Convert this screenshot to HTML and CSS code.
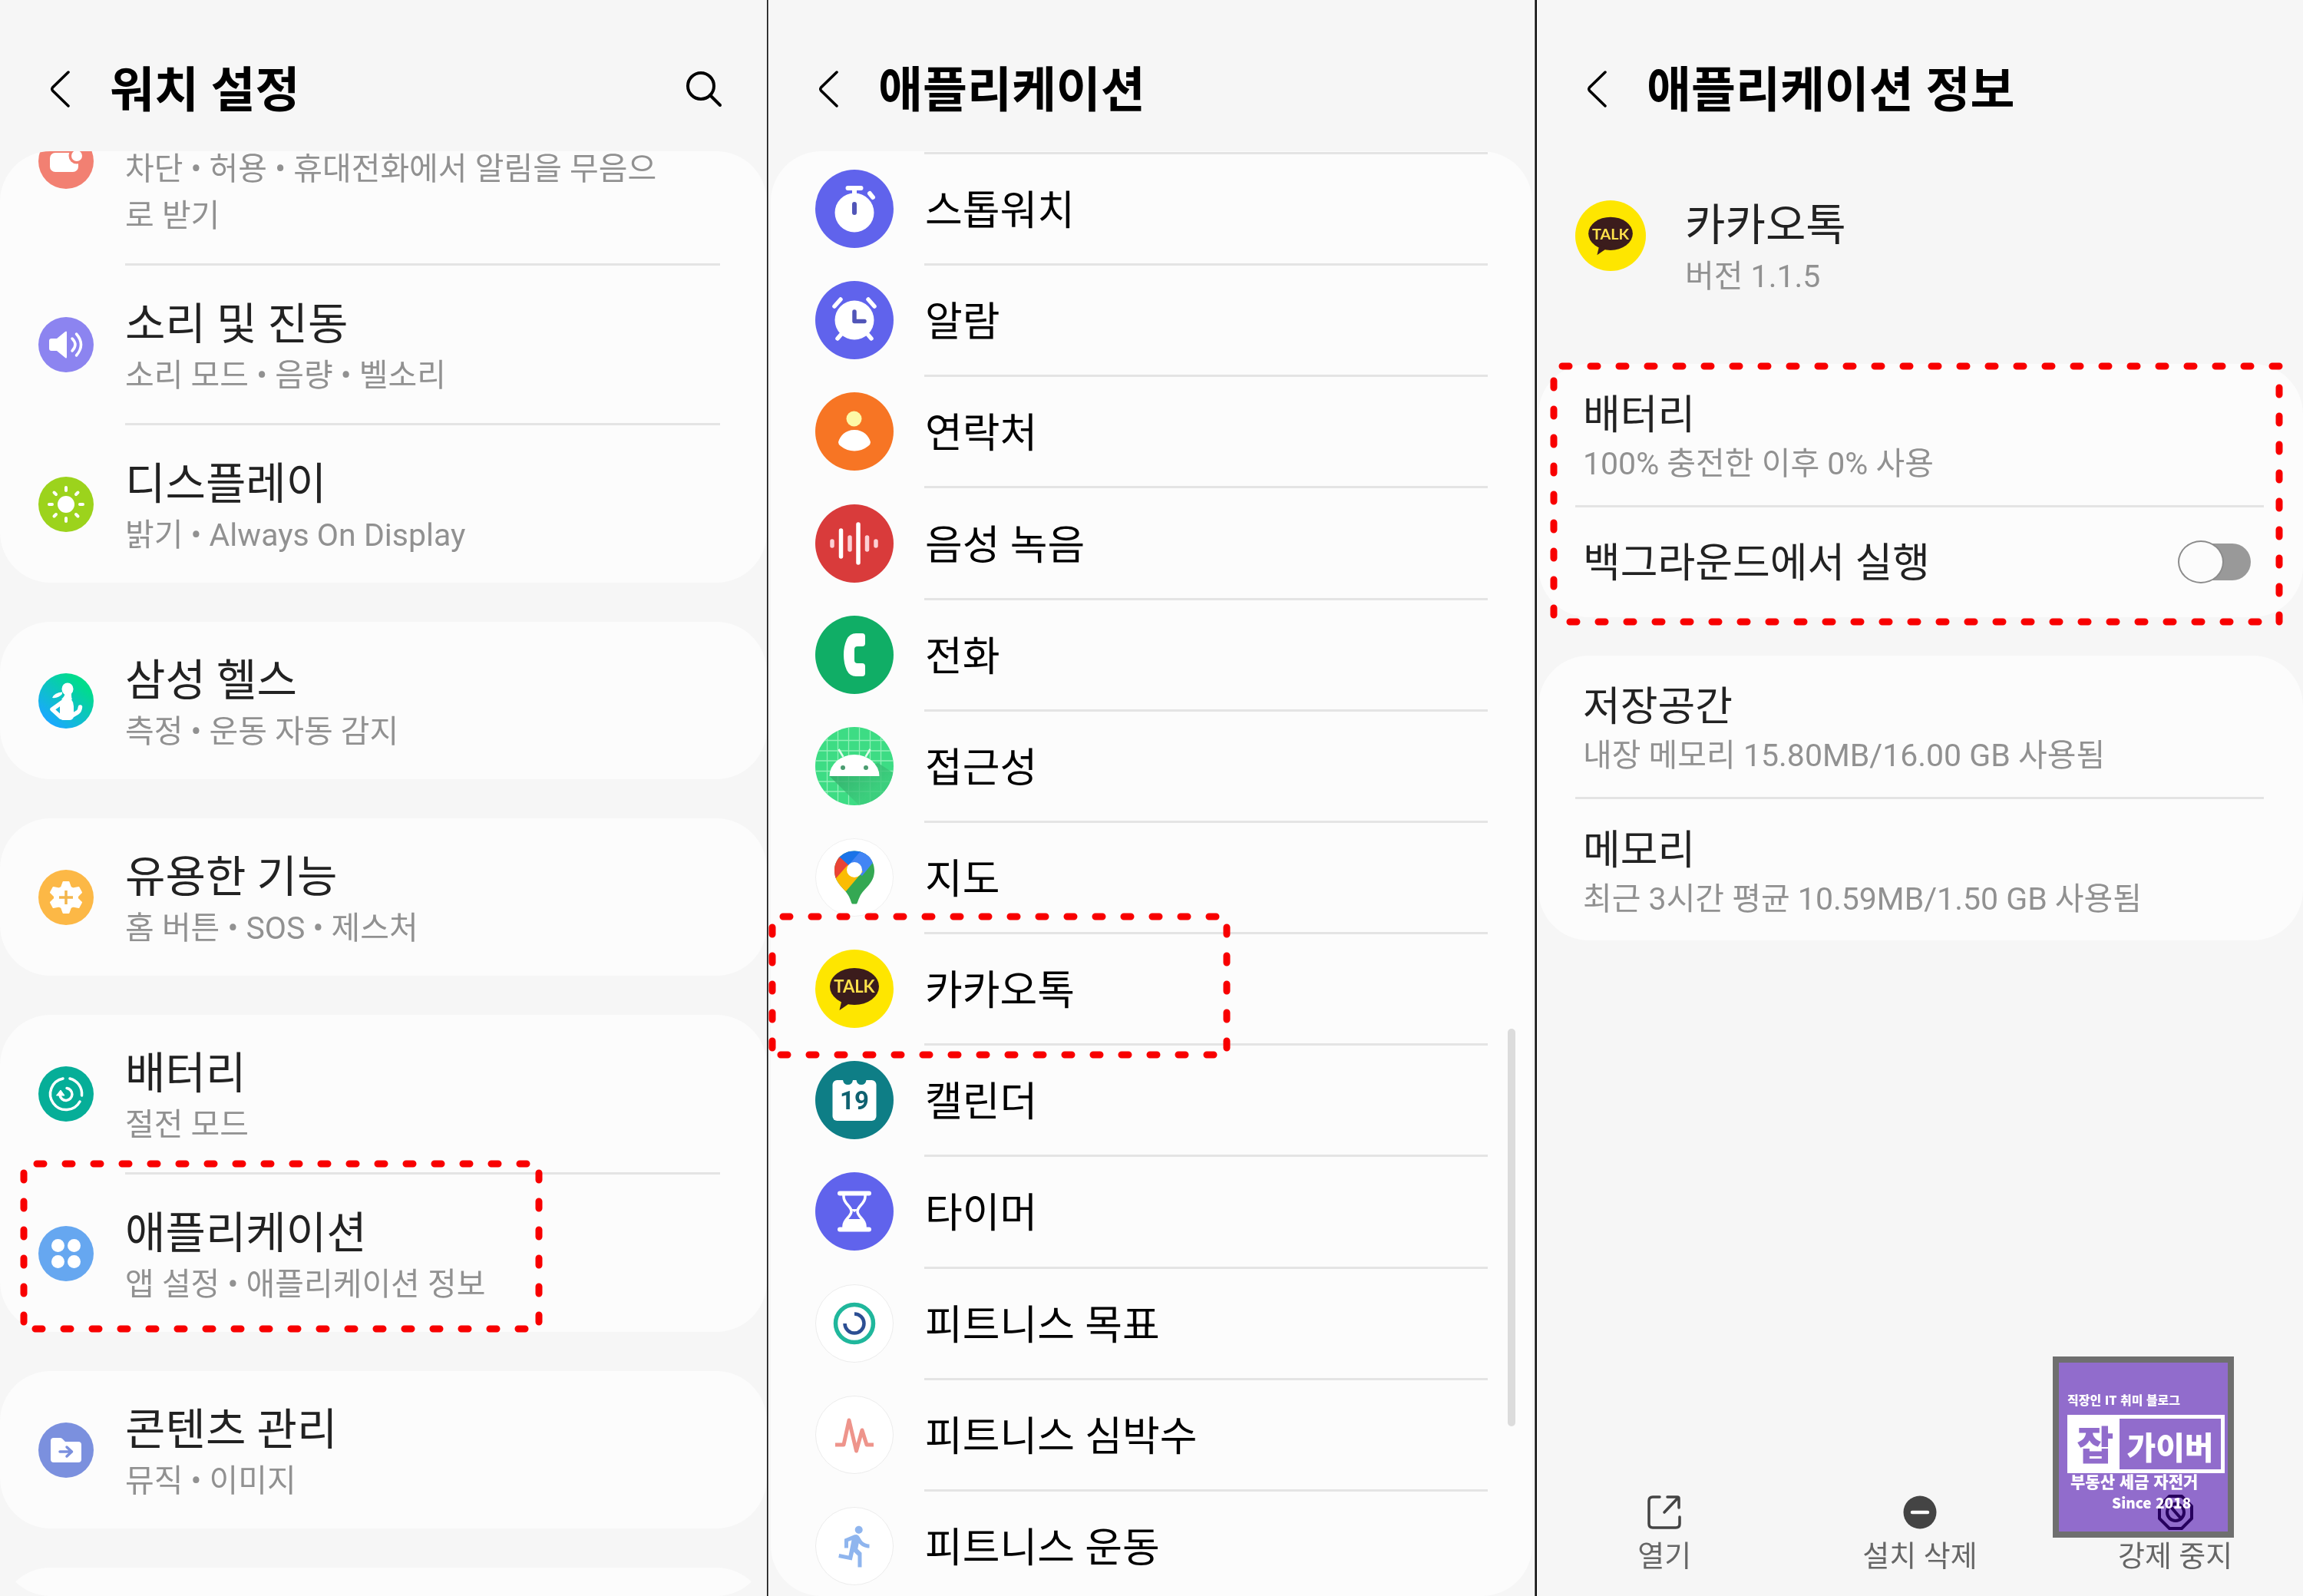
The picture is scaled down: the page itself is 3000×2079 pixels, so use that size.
FILE: index.html
```html
<!DOCTYPE html>
<html lang="ko">
<head>
<meta charset="utf-8">
<meta name="viewport" content="width=device-width, initial-scale=1">
<title>워치 설정</title>
<link rel="stylesheet" href="styles.css">
</head>
<body>
<svg class="sprite" aria-hidden="true">
  <symbol id="back" viewBox="0 0 26 48"><path d="M24 2 3.500 22q-1.500 2 0 4L24 46" fill="none" stroke="currentColor" stroke-width="3.500" stroke-linecap="round"/></symbol>
</svg>

<main class="board">
  <section class="panel">
    <header class="bar">
      <button class="icon-btn" aria-label="뒤로"><svg width="26" height="48"><use href="#back"/></svg></button>
      <h1>워치 설정</h1>
      <button class="icon-btn search" aria-label="검색"><svg width="48" height="48" viewBox="0 0 48 48" fill="none" stroke="#000" stroke-width="4" stroke-linecap="round"><circle cx="20" cy="20" r="17"/><path d="M32 32 45 45"/></svg></button>
    </header>
    <div class="scroller">
      <div class="card card-first">
        <a class="row" href="#notifications">
          <svg class="icon" viewBox="0 0 72 72"><circle cx="36" cy="36" r="36" fill="#f28072"/><rect x="15" y="25" width="37" height="25" rx="7" fill="#fff"/><circle cx="50" cy="29" r="10.500" fill="#f28072"/><circle cx="50" cy="29" r="7" fill="#fff"/></svg>
          <span class="text"><span class="sub">차단 • 허용 • 휴대전화에서 알림을 무음으<br>로 받기</span></span>
        </a>
        <a class="row" href="#sound">
          <svg class="icon" viewBox="0 0 72 72"><circle cx="36" cy="36" r="36" fill="#8c84f0"/><path d="M17 28h7L35 19q2-1.500 2 1v32q0 2.500-2 1L24 44h-7q-3 0-3-3V31q0-3 3-3z" fill="#fff"/><path d="M44 28q8 8 0 16M49.500 22q12 14 0 28" fill="none" stroke="#fff" stroke-width="3.500" stroke-linecap="round"/></svg>
          <span class="text"><span class="name">소리 및 진동</span><span class="sub">소리 모드 • 음량 • 벨소리</span></span>
        </a>
        <a class="row" href="#display">
          <svg class="icon" viewBox="0 0 72 72"><circle cx="36" cy="36" r="36" fill="#9cd31c"/><circle cx="36" cy="36" r="11" fill="#fff"/><path d="M36 14v4M36 54v4M14 36h4M54 36h4M20.500 20.500l2.500 2.500M49 49l2.500 2.500M20.500 51.500 23 49M49 23l2.500-2.500" stroke="#fff" stroke-width="4" stroke-linecap="round"/></svg>
          <span class="text"><span class="name">디스플레이</span><span class="sub">밝기 • Always On Display</span></span>
        </a>
      </div>
      <div class="card">
        <a class="row" href="#health">
          <svg class="icon" viewBox="0 0 72 72"><defs><linearGradient id="hg" x1="0.200" y1="0.900" x2="0.800" y2="0.200"><stop offset="0" stop-color="#1aa8ff"/><stop offset="1" stop-color="#00dc8c"/></linearGradient></defs><circle cx="36" cy="36" r="36" fill="url(#hg)"/><g fill="#fff"><ellipse cx="38" cy="20.500" rx="7.500" ry="8"/><path d="M34 24h9v5q0 3 1 5H30q3-3 4-5z"/><path d="M31 24.500q-10 .500-13 7.500 8 1 13-5z"/><path d="M31 34h12q3 4 3 9v12q0 6-6 6h-8q-3 0-4-4V43z"/></g><path d="M32 37 18 47l11 10M39 58l12-7q3-2 3.500-7" fill="none" stroke="#fff" stroke-width="5.500" stroke-linecap="round" stroke-linejoin="round"/></svg>
          <span class="text"><span class="name">삼성 헬스</span><span class="sub">측정 • 운동 자동 감지</span></span>
        </a>
      </div>
      <div class="card">
        <a class="row" href="#features">
          <svg class="icon" viewBox="0 0 72 72"><circle cx="36" cy="36" r="36" fill="#fcb846"/><path d="M32.500 16h7l2.500 7 3 1.500 7.500-1.500 3.500 6.500-5 5v3l5 5-3.500 6.500-7.500-1.500-3 1.500-2.500 7h-7l-2.500-7-3-1.500-7.500 1.500-3.500-6.500 5-5v-3l-5-5 3.500-6.500 7.500 1.500 3-1.500z" fill="#fff" stroke="#fff" stroke-width="2" stroke-linejoin="round"/><path d="M36 27v18M27 36h18" stroke="#f3b64c" stroke-width="3.500"/></svg>
          <span class="text"><span class="name">유용한 기능</span><span class="sub">홈 버튼 • SOS • 제스처</span></span>
        </a>
      </div>
      <div class="card">
        <a class="row" href="#battery">
          <svg class="icon" viewBox="0 0 72 72"><circle cx="36" cy="36" r="36" fill="#06ae98"/><g fill="none" stroke="#fff" stroke-width="3.500" stroke-linecap="round"><path d="M41 16a20.500 20.500 0 0 1 15.500 22M54 46A20.500 20.500 0 1 1 32 16"/><path d="M37 28.500a8 8 0 1 1-9 9"/></g><path d="M23.500 38 29 31l5 7z" fill="#fff" stroke="#fff" stroke-linejoin="round"/></svg>
          <span class="text"><span class="name">배터리</span><span class="sub">절전 모드</span></span>
        </a>
        <a class="row" href="#apps">
          <svg class="icon" viewBox="0 0 72 72"><circle cx="36" cy="36" r="36" fill="#66a7f0"/><g fill="#fff"><circle cx="25.500" cy="25.500" r="8.500"/><circle cx="46.500" cy="25.500" r="8.500"/><circle cx="25.500" cy="46.500" r="8.500"/><circle cx="46.500" cy="46.500" r="8.500"/></g></svg>
          <span class="text"><span class="name">애플리케이션</span><span class="sub">앱 설정 • 애플리케이션 정보</span></span>
        </a>
      </div>
      <div class="card">
        <a class="row" href="#content">
          <svg class="icon" viewBox="0 0 72 72"><circle cx="36" cy="36" r="36" fill="#7b90de"/><path d="M20 20h8q2 0 3 1l4 4h17q4 0 4 4v19q0 4-4 4H20q-4 0-4-4V24q0-4 4-4z" fill="#fff"/><path d="M28 38h15M37 32l6.500 6-6.500 6" fill="none" stroke="#7b90de" stroke-width="3.500" stroke-linecap="round" stroke-linejoin="round"/></svg>
          <span class="text"><span class="name">콘텐츠 관리</span><span class="sub">뮤직 • 이미지</span></span>
        </a>
      </div>
      <div class="card card-tail"></div>
    </div>
    <svg class="marks" aria-hidden="true"><path d="M48 1516H687M46 1731H685M31 1528V1722M702 1528V1722"/></svg>
  </section>

  <section class="panel panel-apps">
    <header class="bar">
      <button class="icon-btn" aria-label="뒤로"><svg width="26" height="48"><use href="#back"/></svg></button>
      <h1>애플리케이션</h1>
    </header>
    <div class="scroller">
      <ul class="apps">
        <li><a href="#stopwatch"><svg class="icon" viewBox="0 0 102 102"><circle cx="51" cy="51" r="51" fill="#6063ec"/><circle cx="51" cy="56" r="25.500" fill="#fff"/><path d="M42.500 24h17M51 24v8M71 31l4 5" stroke="#fff" stroke-width="6" stroke-linecap="round"/><path d="M51 45v11" stroke="#5155b8" stroke-width="6" stroke-linecap="round"/></svg><span>스톱워치</span></a></li>
        <li><a href="#alarm"><svg class="icon" viewBox="0 0 102 102"><circle cx="51" cy="51" r="51" fill="#6063ec"/><circle cx="51" cy="51" r="25.500" fill="#fff"/><path d="M25 33l8-9M77 33l-8-9M29 75l6-7M73 75l-6-7" stroke="#fff" stroke-width="5.500" stroke-linecap="round"/><path d="M51 40v12.500h13" fill="none" stroke="#5155b8" stroke-width="5.500" stroke-linecap="round" stroke-linejoin="round"/></svg><span>알람</span></a></li>
        <li><a href="#contacts"><svg class="icon" viewBox="0 0 102 102"><circle cx="51" cy="51" r="51" fill="#f77524"/><circle cx="50.500" cy="34.500" r="10" fill="#fdf9a6"/><path d="M51 49c12 0 19 8 21 16q0 3-3 5-8 6.500-18 6.500T33 70q-3-2-3-5c2-8 9-16 21-16z" fill="#fff"/></svg><span>연락처</span></a></li>
        <li><a href="#recorder"><svg class="icon" viewBox="0 0 102 102"><circle cx="51" cy="51" r="51" fill="#d93b3b"/><g stroke-width="5.500" stroke-linecap="round"><path d="M33.500 34v34M56 26v50" stroke="#fff"/><path d="M22 48v6M45 43v16M67.500 43v16M79 48v6" stroke="#fcd0d4"/></g></svg><span>음성 녹음</span></a></li>
        <li><a href="#phone"><svg class="icon" viewBox="0 0 102 102"><circle cx="51" cy="51" r="51" fill="#10ae66"/><path d="M53 23h8q4 0 4 4v9q0 4-4 4h-6q-4 0-4 4v14q0 4 4 4h6q4 0 4 4v9q0 4-4 4h-8q-8 0-12-8-4-9-4-20t4-20q4-8 12-8z" fill="#fff"/></svg><span>전화</span></a></li>
        <li><a href="#accessibility"><svg class="icon" viewBox="0 0 102 102"><defs><clipPath id="ac"><circle cx="51" cy="51" r="51"/></clipPath><linearGradient id="as" x1="0" y1="0" x2="0.700" y2="0.600"><stop offset="0" stop-color="#2f9e63"/><stop offset="1" stop-color="#3bcb7b"/></linearGradient></defs><g clip-path="url(#ac)"><path d="M0 0h102v102H0z" fill="#3ddc84"/><path d="M15.500 0v102M29.500 0v102M43.500 0v102M57.500 0v102M71.500 0v102M85.500 0v102M0 17.500h102M0 31h102M0 44h102M0 57.500h102M0 71h102M0 84h102" stroke="#8ff0b6" stroke-width="1.300"/><path d="M18.500 64 60 105 102 102V60L82 47z" fill="url(#as)" opacity="0.800"/></g><path d="M18.500 64a32.500 28 0 0 1 65 0z" fill="#fff"/><path d="M30.500 29l6 10M71.500 29l-6 10" stroke="#e2fbec" stroke-width="2.500"/><circle cx="36" cy="53" r="3" fill="#4a9c70"/><circle cx="66" cy="53" r="3" fill="#4a9c70"/></svg><span>접근성</span></a></li>
        <li><a href="#maps"><svg class="icon" viewBox="0 0 102 102"><defs><clipPath id="mp"><path d="M51 16.500c15 0 26 11 26 25.500 0 17-13 22-19 34-3 6-3 9.500-4.500 9.500h-5c-1.500 0-1.500-3.500-4.500-9.500C38 64 25 59 25 42c0-14.500 11-25.500 26-25.500z"/></clipPath></defs><circle cx="51" cy="51" r="50.500" fill="#fff" stroke="#f0f0f0"/><g clip-path="url(#mp)"><path d="M0 0h102v102H0z" fill="#34a853"/><path d="M0 0h102v3L51 41 20 20z" fill="#1a73e8"/><path d="M64 10 51 41l10 8 26-32z" fill="#4285f4"/><path d="M58 18 45 33l10 8 25-16z" fill="#4285f4"/><path d="M27 20 10 50l15 3 26-11z" fill="#ea4335"/><path d="M42 35 20 60l20 9 22-26z" fill="#fbbc04"/></g><circle cx="51" cy="41" r="10" fill="#fff"/></svg><span>지도</span></a></li>
        <li><a href="#talk-app"><svg class="icon" viewBox="0 0 102 102"><circle cx="51" cy="51" r="51" fill="#fee600"/><ellipse cx="51" cy="48" rx="32" ry="24" fill="#3b1c1c"/><path d="M35 64 31.500 79 46 69z" fill="#3b1c1c"/><text x="51" y="56" class="talk-text" text-anchor="middle">TALK</text></svg><span>카카오톡</span></a></li>
        <li><a href="#calendar"><svg class="icon" viewBox="0 0 102 102"><circle cx="51" cy="51" r="51" fill="#0e7e86"/><rect x="22.500" y="25" width="57" height="53" rx="6" fill="#fff"/><path d="M36 25h13q-1 6-6.500 6T36 25zM53.500 25h13q-1 6-6.500 6t-6.500-6z" fill="#0e7e86"/><text x="51" y="63" class="day-text" text-anchor="middle">19</text></svg><span>캘린더</span></a></li>
        <li><a href="#timer"><svg class="icon" viewBox="0 0 102 102"><circle cx="51" cy="51" r="51" fill="#6063ec"/><path d="M32 27.500h38M32 74.500h38" stroke="#fff" stroke-width="6" stroke-linecap="round"/><path d="M37 28v4c0 9 10 12 10 19s-10 10-10 19v4M65 28v4c0 9-10 12-10 19s10 10 10 19v4" fill="none" stroke="#fff" stroke-width="3.500"/><path d="M46 48h10l-5 4zM37 73V66q0-3 3-5h22q3 2 3 5v7z" fill="#fff"/></svg><span>타이머</span></a></li>
        <li><a href="#goal"><svg class="icon" viewBox="0 0 102 102"><circle cx="51" cy="51" r="50.500" fill="#fff" stroke="#ececec"/><circle cx="51" cy="51" r="24.500" fill="none" stroke="#20b79c" stroke-width="5.500"/><path d="M51 38.500A12.500 12.500 0 1 1 38.500 51" fill="none" stroke="#2c4f93" stroke-width="4.500"/></svg><span>피트니스 목표</span></a></li>
        <li><a href="#heart"><svg class="icon" viewBox="0 0 102 102"><circle cx="51" cy="51" r="50.500" fill="#fff" stroke="#ececec"/><path d="M26 64h11l7-32 9.500 40L61 45l6 19h9" fill="none" stroke="#ee948b" stroke-width="5" stroke-linejoin="round"/></svg><span>피트니스 심박수</span></a></li>
        <li><a href="#exercise"><svg class="icon" viewBox="0 0 102 102"><circle cx="51" cy="51" r="50.500" fill="#fff" stroke="#ececec"/><path transform="translate(23 21) scale(2.500)" d="M13.490 5.480c1.100 0 2-.9 2-2s-.9-2-2-2-2 .9-2 2 .9 2 2 2zm-3.600 13.900l1-4.400 2.100 2v6h2v-7.500l-2.100-2 .6-3c1.300 1.500 3.300 2.500 5.500 2.500v-2c-1.900 0-3.500-1-4.300-2.400l-1-1.600c-.4-.6-1-1-1.700-1-.3 0-.5.1-.8.1l-5.200 2.200v4.700h2v-3.400l1.800-.7-1.600 8.100-4.900-1-.4 2 7 1.400z" fill="#8fb5ee"/></svg><span>피트니스 운동</span></a></li>
      </ul>
    </div>
    <span class="thumb"></span>
    <svg class="marks" aria-hidden="true"><path d="M19 1194H583M16 1374H580M5 1208V1365M597 1208V1365"/></svg>
  </section>

  <section class="panel panel-info">
    <header class="bar">
      <button class="icon-btn" aria-label="뒤로"><svg width="26" height="48"><use href="#back"/></svg></button>
      <h1>애플리케이션 정보</h1>
    </header>
    <div class="app-head">
      <svg class="icon" viewBox="0 0 102 102"><circle cx="51" cy="51" r="51" fill="#fee600"/><ellipse cx="51" cy="48" rx="32" ry="24" fill="#3b1c1c"/><path d="M35 64 31.500 79 46 69z" fill="#3b1c1c"/><text x="51" y="56" class="talk-text" text-anchor="middle">TALK</text></svg>
      <div class="text"><h2 class="name">카카오톡</h2><p class="sub">버전 1.1.5</p></div>
    </div>
    <div class="info">
      <div class="card">
        <a class="row" href="#app-battery"><span class="text"><span class="name">배터리</span><span class="sub">100% 충전한 이후 0% 사용</span></span></a>
        <div class="row row-switch"><label class="name" for="bg">백그라운드에서 실행</label><input class="switch" id="bg" type="checkbox" role="switch"></div>
      </div>
      <div class="card">
        <a class="row" href="#storage"><span class="text"><span class="name">저장공간</span><span class="sub">내장 메모리 15.80MB/16.00 GB 사용됨</span></span></a>
        <a class="row" href="#memory"><span class="text"><span class="name">메모리</span><span class="sub">최근 3시간 평균 10.59MB/1.50 GB 사용됨</span></span></a>
      </div>
    </div>
    <footer class="actions">
      <button><svg width="48" height="48" viewBox="0 0 48 48" fill="none" stroke="#444" stroke-width="3.500" stroke-linecap="round" stroke-linejoin="round"><path d="M18 4H9Q4 4 4 9v30q0 5 5 5h30q5 0 5-5V30M28 4h13q2 0 2 2v12M42 5 24 24"/></svg>열기</button>
      <button><svg width="48" height="48" viewBox="0 0 48 48"><circle cx="24" cy="24" r="21.500" fill="#444"/><path d="M14 24h20" stroke="#fafafa" stroke-width="4.500" stroke-linecap="round"/></svg>설치 삭제</button>
      <button><svg class="stop" width="48" height="48" viewBox="0 0 48 48" fill="none" stroke="#828c51" stroke-width="4"><path d="M16 3h16l13 13v16L32 45H16L3 32V16z" stroke-linejoin="round"/><circle cx="24" cy="24" r="11"/><path d="M17 16l14 16"/></svg>강제 중지</button>
    </footer>
    <aside class="logo">
      <p class="logo-top">직장인 IT 취미 블로그</p>
      <p class="logo-box"><b>잡</b><span>가이버</span></p>
      <p class="logo-tags">부동산 세금 자전거</p>
      <p class="logo-since">Since 2018</p>
    </aside>
    <svg class="marks" aria-hidden="true"><path d="M33 477H967M43 810H940M22 496V801M967 505V810"/></svg>
  </section>
</main>
</body>
</html>
```
FILE: styles.css
```css
* { box-sizing: border-box; margin: 0; padding: 0; }

body {
  background: #f6f6f6;
  color: #222;
  font-family: Roboto, "Noto Sans CJK KR", sans-serif;
}

a { color: inherit; text-decoration: none; }
button { border: 0; background: none; color: inherit; font: inherit; }
ul { list-style: none; }
svg { display: block; flex: none; }
.sprite { position: absolute; width: 0; height: 0; }

.board {
  display: grid;
  grid-template-columns: repeat(3, 1fr);
  height: 100vh;
  overflow: hidden;
}

.panel {
  position: relative;
  display: flex;
  flex-direction: column;
  min-width: 0;
  min-height: 0;
  border-right: 1px solid #111;
}
.panel-apps { border-right-color: #666; border-left: 1px solid #666; }
.panel-info { border-right: 0; border-left: 2px solid #111; }

/* Title bar */
.bar {
  display: flex;
  align-items: center;
  gap: 52px;
  flex: none;
  height: 197px;
  padding: 34px 58px 0 65px;
  color: #000;
}
.bar h1 { padding-top: 5px; font-size: 63px; line-height: 96px; font-weight: 700; }
.search { margin-left: auto; }

/* Settings list */
.scroller {
  flex: 1;
  min-height: 0;
  overflow: hidden;
  border-radius: 66px;
}
.panel-apps .scroller { margin: 0 3px; background: #fcfcfc; }
.card { background: #fcfcfc; border-radius: 66px; }
.card + .card { margin-top: 51px; }
.card-first { margin-top: -120px; }
.card-tail { height: 205px; }

.row {
  position: relative;
  display: flex;
  align-items: center;
  gap: 41px;
  height: 205px;
  padding: 0 50px;
}
.card-first .row:first-child { height: 266px; align-items: flex-end; }
.card-first .row:first-child .icon { margin-bottom: 97px; }
.row .icon { width: 72px; height: 72px; }
.row .text { padding: 41px 0 31px; }
.row + .row { height: 208px; padding-top: 3px; }
.row + .row::before {
  content: "";
  position: absolute;
  top: 0;
  left: 163px;
  right: 61px;
  height: 3px;
  background: #e4e4e4;
}
.text { display: flex; flex-direction: column; }
.name { font-size: 57px; line-height: 72px; font-weight: 400; }
.sub { font-size: 41px; line-height: 61px; color: #919191; white-space: nowrap; }

/* Application list */
.apps {
  display: flex;
  flex-direction: column;
  height: calc(100% + 6px);
  padding-top: 1px;
}
.apps li { flex: 1; padding-left: 58px; }
.apps a {
  position: relative;
  display: flex;
  align-items: center;
  gap: 41px;
  height: 100%;
  padding-top: 3px;
  color: #000;
  font-size: 53px;
}
.apps a::before {
  content: "";
  position: absolute;
  top: 0;
  left: 142px;
  right: 58px;
  height: 3px;
  background: #e4e4e4;
}
.apps span { padding-bottom: 4px; }
.apps .icon { width: 102px; height: 102px; }
.thumb {
  position: absolute;
  top: 1340px;
  right: 25px;
  width: 10px;
  height: 518px;
  border-radius: 5px;
  background: #dcdcdc;
}

/* Application details */
.app-head {
  display: flex;
  gap: 51px;
  height: 277px;
  padding: 61px 50px 0;
}
.app-head .icon { width: 92px; height: 92px; margin-top: 3px; }
.info { padding-left: 2px; }
.info .card + .card { margin-top: 50px; }
.info .row { height: 184px; padding: 0 58px; }
.info .row .text { padding: 34px 0 23px; }
.info .row .name { font-size: 53px; line-height: 66px; }
.info .row + .row { height: 187px; padding-top: 3px; }
.info .row + .row::before { left: 48px; right: 51px; }
.info .row + .row-switch { height: 146px; justify-content: space-between; padding: 1px 68px 0 58px; }
.row-switch .name { padding-top: 4px; }

.switch {
  position: relative;
  width: 95px;
  height: 56px;
  appearance: none;
}
.switch::before {
  content: "";
  position: absolute;
  inset: 4px 0 4px 10px;
  border-radius: 24px;
  background: #999;
}
.switch::after {
  content: "";
  position: absolute;
  inset: 0 auto 0 0;
  width: 56px;
  border: 2px solid #8c8c8c;
  border-radius: 50%;
  background: #fcfcfc;
}

.actions {
  display: grid;
  grid-template-columns: repeat(3, 1fr);
  margin-top: auto;
  padding-bottom: 27px;
}
.actions button {
  display: flex;
  flex-direction: column;
  align-items: center;
  gap: 8px;
  color: #666;
  font-size: 38px;
  line-height: 50px;
}
.stop { position: relative; z-index: 2; mix-blend-mode: color-burn; }

/* Blog stamp */
.logo {
  position: absolute;
  right: 90px;
  bottom: 76px;
  width: 236px;
  height: 236px;
  padding: 36px 4px 0 11px;
  border: 8px solid #6f6f6f;
  background: #916ccc;
  color: #fff;
  font-family: "Noto Sans CJK KR", sans-serif;
  font-weight: 900;
  white-space: nowrap;
}
.logo-top { font-size: 16px; line-height: 24px; }
.logo-box {
  display: flex;
  align-items: stretch;
  height: 76px;
  margin-top: 8px;
  padding: 5px;
  background: #fff;
  line-height: 64px;
}
.logo-box b { flex: 1; color: #916ccc; font-size: 52px; text-align: center; font-weight: 900; }
.logo-box span { width: 132px; padding-top: 3px; background: #916ccc; font-size: 41px; text-align: center; }
.logo-tags { padding-left: 4px; font-size: 21px; line-height: 20px; }
.logo-since { padding-left: 58px; font-size: 19px; line-height: 36px; }

/* Highlight frames */
.marks {
  position: absolute;
  inset: 0;
  width: 100%;
  height: 100%;
  pointer-events: none;
  fill: none;
  stroke: #f80000;
  stroke-width: 9px;
  stroke-linecap: round;
  stroke-dasharray: 9 28;
}

.talk-text { fill: #fee04a; font: 700 22px Lato, sans-serif; }
.day-text { fill: #0f6170; font: 700 33px Roboto, sans-serif; }
```
